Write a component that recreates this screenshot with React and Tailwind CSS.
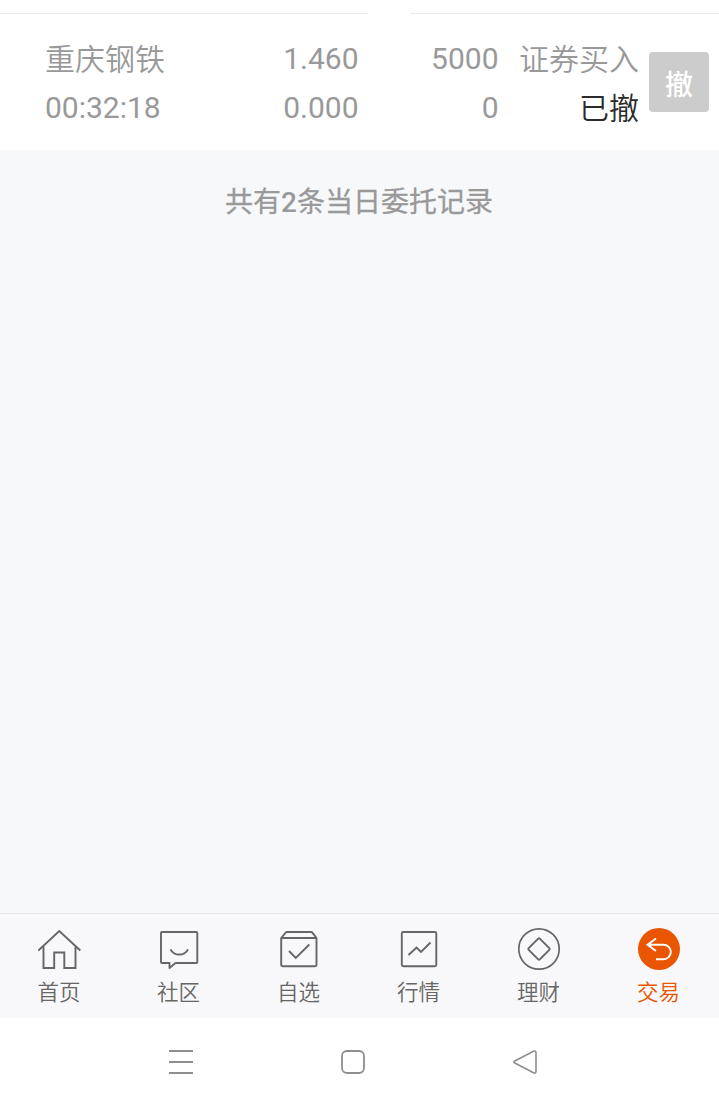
import React from 'react';

function Icon({ children }) {
  return (
    <svg width="44" height="44" viewBox="0 0 44 44" fill="none" stroke="currentColor" strokeWidth="1.900">
      {children}
    </svg>
  );
}

const tabs = [
  {
    label: '首页',
    icon: (
      <Icon>
        <path d="M0.300 23.500 21.300 4 42.300 23.500M5.500 19.500V41H16.200V25.500H26.300V41H37.500V19.500" />
      </Icon>
    ),
  },
  {
    label: '社区',
    icon: (
      <Icon>
        <path
          strokeLinejoin="round"
          d="M5 5H39.300Q40.300 5 40.300 6V35Q40.300 36 39.300 36H18.500L12.500 41V36H5Q4 36 4 35V6Q4 5 5 5Z"
        />
        <path d="M13.500 22.300C17 29.300 27.500 29.300 31 22.300" />
      </Icon>
    ),
  },
  {
    label: '自选',
    icon: (
      <Icon>
        <path strokeLinejoin="round" d="M4.200 11 8.500 5.800Q9 5 10 5H34Q35 5 35.500 5.800L39.500 11V37.500Q39.500 39.300 37.700 39.300H6Q4.200 39.300 4.200 37.500ZM4.200 11H39.500" />
        <path d="M12 24 18.800 31 32.300 17.500" />
      </Icon>
    ),
  },
  {
    label: '行情',
    icon: (
      <Icon>
        <rect x="4.800" y="5" width="34.500" height="34.300" rx="1.500" />
        <path d="M11.500 28 19.500 20.500 24 25 33.500 15.500" />
      </Icon>
    ),
  },
  {
    label: '理财',
    icon: (
      <Icon>
        <circle cx="22" cy="22" r="20.200" strokeWidth="1.700" />
        <path
          strokeLinejoin="round"
          d="M21.200 11.700Q22 10.900 22.800 11.700L32.300 21.200Q33.100 22 32.300 22.800L22.800 32.300Q22 33.100 21.200 32.300L11.700 22.800Q10.900 22 11.700 21.200Z"
        />
      </Icon>
    ),
  },
  {
    label: '交易',
    active: true,
    icon: (
      <Icon>
        <circle cx="22" cy="22" r="21" fill="currentColor" stroke="none" />
        <path stroke="#fff" d="M19 11.500 10.500 17.700 19 24M10.500 17.700H26.500A7.300 7.300 0 0 1 26.500 32.300H19" />
      </Icon>
    ),
  },
];

export default function App() {
  return (
    <div className="flex h-[1105px] w-[719px] flex-col overflow-hidden bg-[#f7f8fa] font-['Roboto','Noto_Sans_CJK_SC',sans-serif] text-[#999]">
      <section className="h-[150px] shrink-0 bg-white pt-[13px]">
        <div className="flex justify-between">
          <div className="h-px w-[368px] bg-[#ebebeb]" />
          <div className="h-px w-[309px] bg-[#ebebeb]" />
        </div>
        <div className="flex items-start pr-[10px] pl-[45px] pt-5">
          <div className="grid grid-cols-[180px_133.500px_140px_140.500px] text-[30px] leading-[49px]">
            <span className="pt-[2px] leading-[47px] font-[350]">重庆钢铁</span>
            <span className="text-right">1.460</span>
            <span className="text-right">5000</span>
            <span className="pt-[2px] text-right leading-[47px] font-[350]">证券买入</span>
            <span>00:32:18</span>
            <span className="text-right">0.000</span>
            <span className="text-right">0</span>
            <span className="pt-[2px] text-right leading-[47px] font-[350] text-[#2b2b2b]">已撤</span>
          </div>
          <button className="mt-[18px] ml-[10px] flex size-[60px] shrink-0 items-center justify-center rounded bg-[#ccc] pt-[7px] text-[28px] leading-none font-medium text-white">
            撤
          </button>
        </div>
      </section>

      <main className="flex-1 pt-[32px] pr-px text-center text-[28px] leading-[42px] [-webkit-text-stroke:0.3px]">
        共有<span className="font-medium [-webkit-text-stroke:0]">2</span>条当日委托记录
      </main>

      <nav className="grid h-[105px] shrink-0 grid-cols-[119px_repeat(5,120px)] border-t border-[#e3e4e7] bg-[#f8f8fa] pt-[13px]">
        {tabs.map((t) => (
          <a
            key={t.label}
            className={`flex flex-col items-center text-[21.500px] leading-[44px] font-[350] ${t.active ? 'text-[#e95500]' : 'text-[#666]'}`}
          >
            {t.icon}
            <span className="pr-px">{t.label}</span>
          </a>
        ))}
      </nav>

      <footer className="flex h-[87px] shrink-0 items-center justify-between bg-white pr-[181px] pl-[168px] text-[#8e8e8e]">
        <svg width="26" height="26" viewBox="0 0 26 26" fill="none" stroke="currentColor" strokeWidth="2">
          <path d="M1 2H25M1 13H25M1 24H25" />
        </svg>
        <svg width="26" height="26" viewBox="0 0 26 26" fill="none" stroke="currentColor" strokeWidth="1.800">
          <rect x="2" y="2" width="22" height="22" rx="5" />
        </svg>
        <svg width="26" height="26" viewBox="0 0 26 26" fill="none" stroke="currentColor" strokeWidth="1.600">
          <path d="M2.800 12Q1 13 2.800 14L21.500 23.700Q24 24.600 24 22V4Q24 1.400 21.500 2.300Z" />
        </svg>
      </footer>
    </div>
  );
}
